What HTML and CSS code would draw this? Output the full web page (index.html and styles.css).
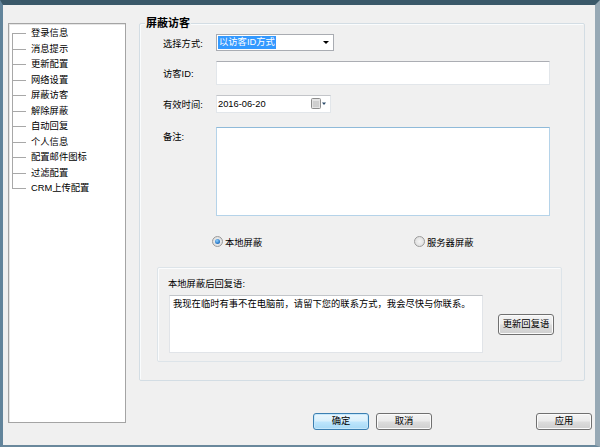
FILE: index.html
```html
<!DOCTYPE html>
<html lang="zh-CN">
<head>
<meta charset="utf-8">
<title>屏蔽访客</title>
<link rel="stylesheet" href="styles.css">
</head>
<body>
<div class="window">
  <div class="main">
    <ul class="tree">
      <li>登录信息</li>
      <li>消息提示</li>
      <li>更新配置</li>
      <li>网络设置</li>
      <li>屏蔽访客</li>
      <li>解除屏蔽</li>
      <li>自动回复</li>
      <li>个人信息</li>
      <li>配置邮件图标</li>
      <li>过滤配置</li>
      <li>CRM上传配置</li>
    </ul>
    <div class="content">
      <div class="group">
        <div class="group-title">屏蔽访客</div>
        <div class="row row-combo">
          <span class="label">选择方式:</span>
          <div class="combo"><span class="sel">以访客ID方式</span><span class="arrow"></span></div>
        </div>
        <div class="row row-id">
          <span class="label">访客ID:</span>
          <div class="input"></div>
        </div>
        <div class="row row-date">
          <span class="label">有效时间:</span>
          <div class="date"><span>2016-06-20</span>
            <svg class="cal" width="16" height="12" viewBox="0 0 16 12">
              <rect x="0.5" y="0.5" width="9" height="10" rx="1" fill="#e4e4e4" stroke="#8c8c8c"/>
              <rect x="2" y="3" width="6" height="6" fill="#cfcfcf"/>
              <path d="M11 4.5h4l-2 2.5z" fill="#2a4a6a"/>
            </svg>
          </div>
        </div>
        <div class="row row-note">
          <span class="label">备注:</span>
          <div class="note"></div>
        </div>
        <div class="radios">
          <span class="radio checked"><span class="dot"></span>本地屏蔽</span>
          <span class="radio"><span class="dot"></span>服务器屏蔽</span>
        </div>
        <div class="inner">
          <div class="inner-title">本地屏蔽后回复语:</div>
          <div class="reply-row">
            <div class="reply">我现在临时有事不在电脑前，请留下您的联系方式，我会尽快与你联系。</div>
            <button class="btn btn-update">更新回复语</button>
          </div>
        </div>
      </div>
      <div class="actions">
        <button class="btn btn-default">确定</button>
        <button class="btn">取消</button>
        <button class="btn btn-apply">应用</button>
      </div>
    </div>
  </div>
</div>
</body>
</html>
```

FILE: styles.css
```css
* { box-sizing: border-box; }
html, body { margin: 0; padding: 0; }
body {
  width: 600px;
  height: 447px;
  overflow: hidden;
  font-family: "Liberation Sans", "Noto Sans CJK SC", sans-serif;
  font-size: 9.3px;
  color: #000;
  background: #f0f0f0;
}
.window {
  width: 600px;
  height: 447px;
  background: #f0f0f0;
  border-top: 5px solid #3a5869;
  border-left: 3px solid #62849b;
  border-right: 5px solid #97a9b5;
  border-bottom: 2px solid #6a889c;
}
.main {
  display: grid;
  grid-template-columns: 118px 1fr;
  column-gap: 13px;
  padding: 18px 3px 0 5px;
}

/* tree */
.tree {
  list-style: none;
  margin: 0;
  padding: 2px 0 0 0;
  height: 400px;
  background: #fff;
  border: 1px solid #a4a4a4;
  box-shadow: inset 1px 1px 0 #e6e6e6;
}
.tree li {
  display: flex;
  align-items: center;
  height: 15.5px;
  line-height: 15.5px;
  white-space: nowrap;
}
.tree li::before {
  content: "";
  flex: none;
  width: 20px;
  height: 100%;
  margin-right: 2px;
  background:
    linear-gradient(#a8a8a8, #a8a8a8) 3px 0 / 1px 100% no-repeat,
    linear-gradient(#a8a8a8, #a8a8a8) 3px 50% / 14px 1px no-repeat;
}
.tree li:first-child::before {
  background:
    linear-gradient(#a8a8a8, #a8a8a8) 3px 100% / 1px 50% no-repeat,
    linear-gradient(#a8a8a8, #a8a8a8) 3px 50% / 14px 1px no-repeat;
}
.tree li:last-child::before {
  background:
    linear-gradient(#a8a8a8, #a8a8a8) 3px 0 / 1px 50% no-repeat,
    linear-gradient(#a8a8a8, #a8a8a8) 3px 50% / 14px 1px no-repeat;
}

/* right content */
.content { display: flex; flex-direction: column; }
.group {
  width: 446px;
  height: 358px;
  border: 1px solid #d3dde4;
  border-radius: 2px;
  padding: 0 21px 0 17px;
  box-shadow: inset 1px 1px 0 #fafcfd;
}
.group-title {
  width: fit-content;
  margin: -8px 0 0 -12px;
  padding: 0 1px;
  line-height: 15px;
  font-size: 11px;
  font-weight: bold;
  background: #f0f0f0;
}
.row {
  display: flex;
  align-items: center;
  padding-left: 6px;
}
.label { width: 53px; flex: none; white-space: nowrap; }
.row-combo { margin-top: 3px; height: 17px; }
.combo {
  width: 118px;
  height: 17px;
  border: 1px solid #a9acb2;
  background: #fff;
  display: flex;
  align-items: center;
  padding: 0 0 0 1px;
}
.sel {
  background: #3399ff;
  color: #fff;
  line-height: 13px;
  padding: 0 1px;
  width: 58px;
  white-space: nowrap;
}
.arrow {
  margin-left: auto;
  margin-right: 4px;
  width: 0;
  height: 0;
  border-left: 3px solid transparent;
  border-right: 3px solid transparent;
  border-top: 3px solid #000;
}
.row-id { margin-top: 10px; height: 24px; }
.input {
  width: 334px;
  height: 24px;
  background: #fff;
  border: 1px solid #e2e6ea;
  border-top-color: #abadb3;
}
.row-date { margin-top: 10px; height: 18px; }
.date {
  width: 115px;
  height: 18px;
  background: #fff;
  border: 1px solid #e2e6ea;
  border-top-color: #c3c5c9;
  display: flex;
  align-items: center;
  padding-left: 1px;
}
.cal { margin-left: auto; margin-right: 3px; }
.row-note { margin-top: 14px; align-items: flex-start; height: 89px; }
.row-note .label { margin-top: 3px; line-height: 15px; }
.note {
  width: 334px;
  height: 89px;
  background: #fff;
  border: 1px solid #b5d3e9;
  border-top-color: #8fbad9;
}
.radios {
  display: flex;
  align-items: center;
  height: 15px;
  margin-top: 18px;
  padding-left: 55px;
}
.radio {
  display: flex;
  align-items: center;
  white-space: nowrap;
}
.radio:first-child { width: 202px; }
.dot {
  width: 11px;
  height: 11px;
  border-radius: 50%;
  border: 1px solid #9a9a9a;
  background: radial-gradient(circle, #f4f4f4 0, #d8d8d8 100%);
  margin-right: 2px;
  display: flex;
  align-items: center;
  justify-content: center;
}
.radio.checked .dot::after {
  content: "";
  width: 5px;
  height: 5px;
  border-radius: 50%;
  background: radial-gradient(circle at 40% 35%, #8fd0ff 0, #1f6fc0 70%);
}
.inner {
  margin-top: 18px;
  width: 405px;
  height: 95px;
  border: 1px solid #dde4e9;
  border-radius: 2px;
  padding: 9px 7px 0 10px;
  box-shadow: inset 1px 1px 0 #fbfcfd;
}
.inner-title { line-height: 15px; white-space: nowrap; }
.reply-row {
  display: flex;
  align-items: center;
  margin-top: 3px;
}
.reply {
  margin-left: 1px;
  width: 314px;
  height: 58px;
  background: #fff;
  border: 1px solid #e1e4e8;
  border-top-color: #c2c5c9;
  padding: 2px 3px;
  line-height: 13px;
  white-space: nowrap;
  overflow: hidden;
}
.btn {
  font: inherit;
  color: #000;
  height: 17px;
  width: 56px;
  padding: 0;
  border: 1px solid #707070;
  border-radius: 3px;
  background: linear-gradient(#f4f4f4 0, #ebebeb 48%, #dddddd 52%, #cfcfcf 100%);
  box-shadow: inset 0 0 0 1px #fbfbfb;
  line-height: 15px;
}
.btn-update {
  margin-left: 15px;
  height: 21px;
  width: 56px;
}
.actions {
  display: flex;
  gap: 7px;
  margin-top: 32px;
  padding-left: 174px;
}
.btn-default {
  border-color: #3c7fb1;
  background: linear-gradient(#eaf6fd 0, #d9f0fc 48%, #bee6fd 52%, #a7d9f5 100%);
  box-shadow: inset 0 0 0 1px #c6e8fc;
}
.btn-apply { margin-left: auto; }
```
